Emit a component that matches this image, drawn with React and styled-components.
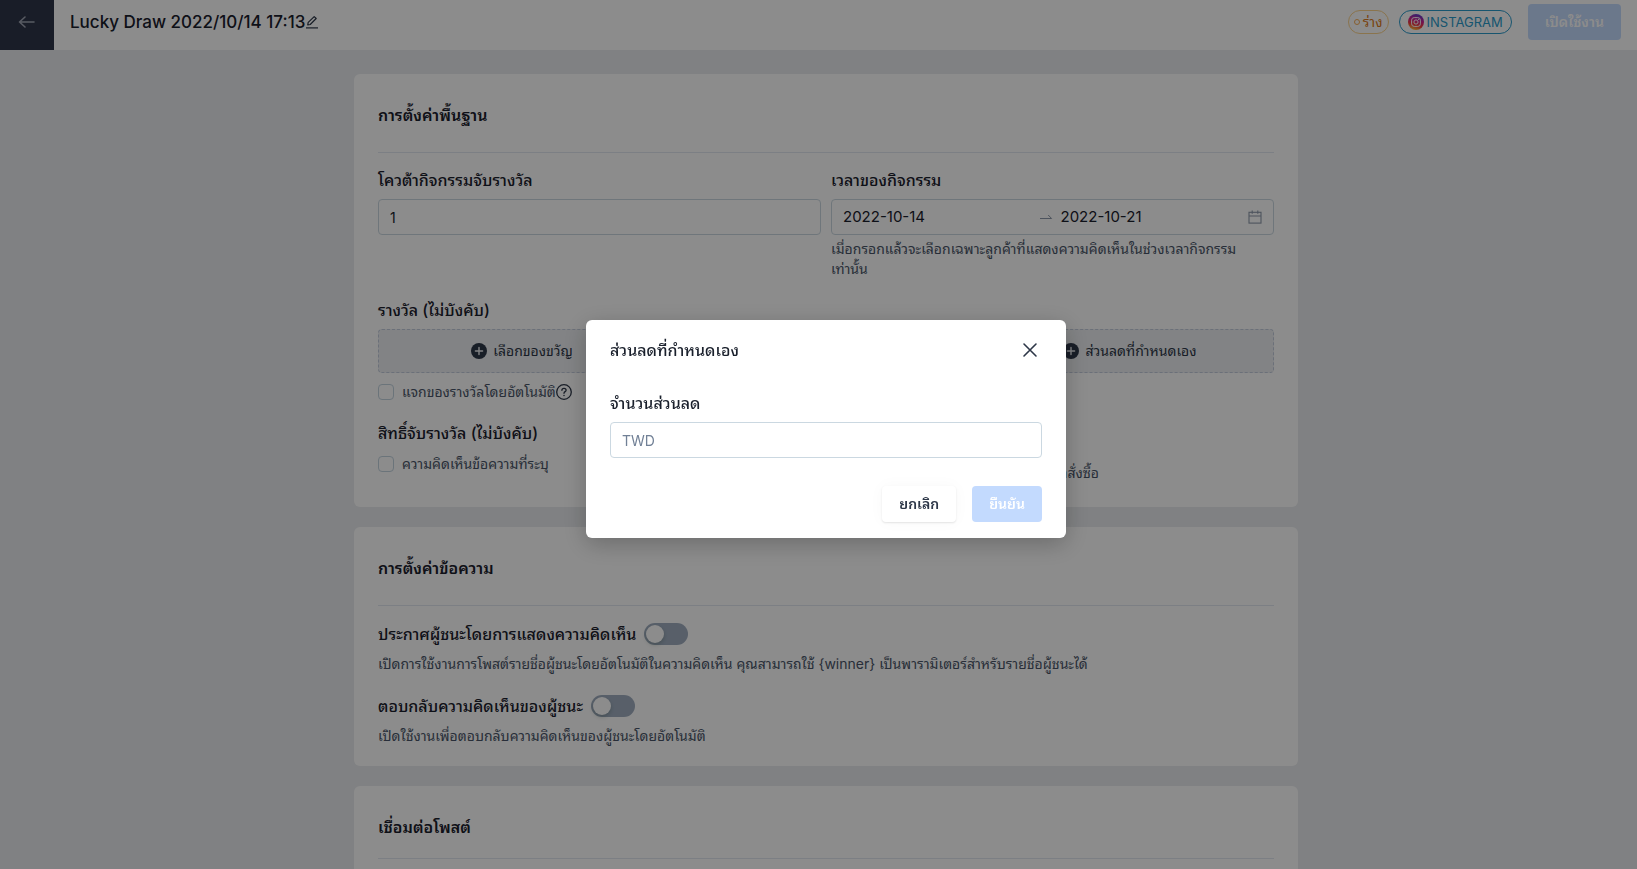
import React, {useState} from 'react';
import styled, {createGlobalStyle} from 'styled-components';

const GlobalStyle = createGlobalStyle`
  *, *::before, *::after {
    box-sizing: border-box;
  }
  body {
    margin: 0;
    background: #e9ebee;
    color: #1a202c;
    font-family: Inter, "Noto Sans Thai Looped", "Noto Looped Thai", Loma, "Noto Sans", sans-serif;
    font-size: 14px;
    line-height: 20px;
    overflow: hidden;
  }
  button, input {
    font: inherit;
    color: inherit;
  }
`;

const Page = styled.div`
  height: 100vh;
  overflow: hidden;
`;

const TopBar = styled.header`
  display: flex;
  height: 50px;
  background: #fff;
`;

const BackLink = styled.a`
  display: flex;
  justify-content: center;
  width: 54px;
  padding-top: 14px;
  background: #2f3549;
  color: #a0a6b4;
`;

const TopBarBody = styled.div`
  flex: 1;
  display: flex;
  align-items: center;
  justify-content: space-between;
  padding: 4px 16px 10px;
`;

const PageTitle = styled.h1`
  display: flex;
  align-items: center;
  margin: 0;
  font-size: 17px;
  font-weight: 500;
  line-height: 24px;
`;

const IconButton = styled.button`
  display: flex;
  padding: 0;
  border: 0;
  background: none;
  color: #2d3748;
  cursor: pointer;
`;

const TopBarActions = styled.div`
  display: flex;
  align-items: center;
  gap: 16px;
`;

const Tags = styled.div`
  display: flex;
  gap: 10px;
`;

const Tag = styled.span`
  display: flex;
  align-items: center;
  gap: 3px;
  height: 24px;
  padding: 0 ${props => (props.$tone === 'draft' ? '5px' : '8px')};
  border: 1px solid ${props => (props.$tone === 'draft' ? '#fbd38d' : '#2b9bcb')};
  border-radius: 12px;
  color: ${props => (props.$tone === 'draft' ? '#dd7a20' : '#2b9bcb')};
  font-size: ${props => (props.$tone === 'draft' ? '14px' : '13px')};
`;

const Dot = styled.span`
  width: 6px;
  height: 6px;
  border: 1px solid #f6ad55;
  border-radius: 50%;
`;

const Button = styled.button`
  height: 36px;
  padding: 0 17px;
  border: 0;
  border-radius: 4px;
  font-weight: 600;
  background: ${props => (props.$primary ? '#c3dafe' : '#fff')};
  color: ${props => (props.$primary ? '#fff' : '#2d3748')};
  box-shadow: ${props => (props.$primary ? 'none' : '0 1px 2px rgba(0, 0, 0, 0.1), 0 0 16px rgba(0, 0, 0, 0.03)')};
`;

const Content = styled.main`
  display: flex;
  flex-direction: column;
  align-items: center;
  gap: 20px;
  padding: 24px 0 24px 15px;
`;

const Card = styled.section`
  width: 100%;
  max-width: 944px;
  padding: 0 24px ${props => (props.$tight ? '16px' : '24px')};
  border-radius: 6px;
  background: #fff;
`;

const CardTitle = styled.h2`
  margin: 0;
  padding: 29px 0 ${props => (props.$compact ? '19px' : '25px')};
  border-bottom: 1px solid #e2e8f0;
  font-size: 16px;
  font-weight: 600;
  line-height: 24px;
`;

const Columns = styled.div`
  display: grid;
  grid-template-columns: repeat(${props => props.$count}, minmax(0, 1fr));
  align-items: start;
  gap: ${props => props.$gap};
`;

const Field = styled.div`
  display: flex;
  flex-direction: column;
`;

const Label = styled.label`
  margin-bottom: 7px;
  font-size: 16px;
  font-weight: 500;
  line-height: 24px;
`;

const GroupTitle = styled.h3`
  margin: 0 0 7px;
  font-size: 16px;
  font-weight: 500;
  line-height: 24px;
`;

const Fields = styled(Columns)`
  padding: 15px 0 19px;
`;

const TextInput = styled.input`
  width: 100%;
  height: 36px;
  padding: 0 11px;
  border: 1px solid #cbd8e1;
  border-radius: 4px;
  background: #fff;
  outline: 0;

  &::placeholder {
    color: #718096;
    opacity: 1;
  }
`;

const DateRange = styled.div`
  display: flex;
  align-items: center;
  height: 36px;
  padding: 0 11px;
  border: 1px solid #cbd8e1;
  border-radius: 4px;
  color: #8d98aa;
`;

const DateInput = styled.input`
  flex: 1;
  min-width: 0;
  padding: 0;
  border: 0;
  background: none;
  color: #1a202c;
  font-size: 15px;
  outline: 0;
`;

const RangeArrow = styled.span`
  display: flex;
  padding: 0 8px;
`;

const Hint = styled.p`
  margin: ${props => (props.$spaced ? '8px' : '4px')} 0 0;
  padding-right: 24px;
  color: #4a5568;
`;

const AddButton = styled.button`
  display: flex;
  align-items: center;
  justify-content: center;
  gap: 6px;
  height: 44px;
  border: 1px dashed #c3ccdc;
  border-radius: 4px;
  background: #edeff2;
  color: #2d3748;
`;

const CheckLabel = styled.label`
  display: flex;
  align-items: center;
  gap: 8px;
  color: #4a5568;
`;

const Checkbox = styled.input`
  appearance: none;
  width: 16px;
  height: 16px;
  margin: 0;
  border: 1px solid #c3d3de;
  border-radius: 4px;
`;

const CheckRow = styled.div`
  display: flex;
  align-items: center;
  padding: ${props => (props.$last ? '2px 0 0' : '9px 0 19px')};
`;

const OrderNote = styled.div`
  display: flex;
  justify-content: flex-end;
  width: 268px;
  padding-top: 11px;
  color: #4a5568;
`;

const SwitchGroup = styled.div`
  padding: 16px 0 4px;
`;

const SwitchRow = styled.label`
  display: flex;
  align-items: center;
  gap: 8px;
  height: 24px;
  font-size: 16px;
  font-weight: 500;
  line-height: 24px;
`;

const Switch = styled.input`
  appearance: none;
  display: flex;
  width: 44px;
  height: 22px;
  margin: 0;
  padding: 2px;
  border-radius: 11px;
  background: ${props => (props.checked ? '#4299e1' : '#a0aec0')};
  justify-content: ${props => (props.checked ? 'flex-end' : 'flex-start')};

  &::before {
    content: '';
    width: 18px;
    height: 18px;
    border-radius: 50%;
    background: #fff;
    box-shadow: 0 2px 4px rgba(0, 35, 11, 0.2);
  }
`;

const Overlay = styled.div`
  position: fixed;
  inset: 0;
  display: flex;
  align-items: flex-start;
  justify-content: center;
  padding: 320px 0 0 15px;
  background: rgba(0, 0, 0, 0.45);
`;

const Modal = styled.div`
  width: 480px;
  padding: 0 24px 16px;
  border-radius: 6px;
  background: #fff;
  box-shadow: 0 6px 24px rgba(0, 0, 0, 0.24);
`;

const ModalHeader = styled.div`
  display: flex;
  align-items: center;
  justify-content: space-between;
  height: 60px;
  margin-bottom: 11px;
`;

const ModalTitle = styled.h2`
  margin: 0;
  font-size: 16px;
  font-weight: 500;
  line-height: 24px;
`;

const ModalFooter = styled.div`
  display: flex;
  justify-content: flex-end;
  gap: 16px;
  padding-top: 28px;
`;

const BackIcon = () => (
  <svg width="18" height="16" viewBox="0 0 18 16" fill="none" stroke="currentColor" strokeWidth="1.6" strokeLinecap="round" strokeLinejoin="round">
    <path d="M16 8H1.5M7 3L1.5 8L7 13" />
  </svg>
);

const EditIcon = () => (
  <svg width="14" height="14" viewBox="0 0 14 14" fill="none" stroke="currentColor" strokeWidth="1.2" strokeLinejoin="round">
    <path d="M2.7 10L3.2 7.4L9.2 1.6L11.2 3.5L5.2 9.5Z" />
    <path d="M1 12.9H13" />
  </svg>
);

const InstagramIcon = () => (
  <svg width="16" height="16" viewBox="0 0 16 16">
    <defs>
      <linearGradient id="insta" x1="0.35" y1="1" x2="0.65" y2="0">
        <stop offset="0" stopColor="#ffc43d" />
        <stop offset="0.3" stopColor="#f5423a" />
        <stop offset="0.6" stopColor="#d3208f" />
        <stop offset="1" stopColor="#5a3fd0" />
      </linearGradient>
    </defs>
    <circle cx="8" cy="8" r="8" fill="url(#insta)" />
    <rect x="3.6" y="3.6" width="8.8" height="8.8" rx="2.6" fill="none" stroke="#fff" strokeWidth="1" />
    <circle cx="8" cy="8" r="2.1" fill="none" stroke="#fff" strokeWidth="1" />
    <circle cx="10.6" cy="5.4" r="0.6" fill="#fff" />
  </svg>
);

const SwapIcon = () => (
  <svg width="14" height="14" viewBox="0 0 14 14" fill="none" stroke="currentColor" strokeWidth="1">
    <path d="M1 8.5H12.6L9.2 5" />
  </svg>
);

const CalendarIcon = () => (
  <svg width="14" height="14" viewBox="0 0 14 14" fill="none" stroke="currentColor" strokeWidth="1.1">
    <rect x="1" y="2.3" width="12" height="10.8" />
    <path d="M1 6H13M4.2 0.6V3.8M9.8 0.6V3.8" />
  </svg>
);

const PlusIcon = () => (
  <svg width="16" height="16" viewBox="0 0 16 16">
    <circle cx="8" cy="8" r="8" fill="#2d3748" />
    <path d="M8 4.4V11.6M4.4 8H11.6" stroke="#edeff2" strokeWidth="1.4" strokeLinecap="round" />
  </svg>
);

const HelpIcon = () => (
  <svg width="16" height="16" viewBox="0 0 16 16" fill="none" stroke="currentColor" strokeWidth="1.3" strokeLinecap="round">
    <circle cx="8" cy="8" r="7.3" />
    <path d="M5.9 6.3C5.9 5 6.8 4.3 8 4.3C9.2 4.3 10.1 5.1 10.1 6.2C10.1 7.6 8 7.7 8 9.3" />
    <path d="M8 11.5V11.6" strokeWidth="1.5" />
  </svg>
);

const CloseIcon = () => (
  <svg width="24" height="24" viewBox="0 0 24 24" fill="none" stroke="currentColor" strokeWidth="1.6" strokeLinecap="round">
    <path d="M6 6L18 18M18 6L6 18" />
  </svg>
);

const gifts = ['เลือกของขวัญ', 'เลือกคูปอง', 'ส่วนลดที่กำหนดเอง'];

const switches = [
  {
    title: 'ประกาศผู้ชนะโดยการแสดงความคิดเห็น',
    text: 'เปิดการใช้งานการโพสต์รายชื่อผู้ชนะโดยอัตโนมัติในความคิดเห็น คุณสามารถใช้ {winner} เป็นพารามิเตอร์สำหรับรายชื่อผู้ชนะได้',
  },
  {
    title: 'ตอบกลับความคิดเห็นของผู้ชนะ',
    text: 'เปิดใช้งานเพื่อตอบกลับความคิดเห็นของผู้ชนะโดยอัตโนมัติ',
  },
];

const SwitchField = ({title, text}) => {
  const [on, setOn] = useState(false);
  return (
    <SwitchGroup>
      <SwitchRow>
        {title}
        <Switch type="checkbox" role="switch" checked={on} onChange={() => setOn(!on)} />
      </SwitchRow>
      <Hint $spaced>{text}</Hint>
    </SwitchGroup>
  );
};

const DiscountModal = () => (
  <Overlay>
    <Modal role="dialog" aria-modal="true" aria-labelledby="discount-title">
      <ModalHeader>
        <ModalTitle id="discount-title">ส่วนลดที่กำหนดเอง</ModalTitle>
        <IconButton type="button" aria-label="ปิด"><CloseIcon /></IconButton>
      </ModalHeader>
      <Field>
        <Label htmlFor="discount">จำนวนส่วนลด</Label>
        <TextInput id="discount" placeholder="TWD" />
      </Field>
      <ModalFooter>
        <Button type="button">ยกเลิก</Button>
        <Button type="button" $primary disabled>ยืนยัน</Button>
      </ModalFooter>
    </Modal>
  </Overlay>
);

export default function App() {
  return (
    <Page>
      <GlobalStyle />
      <TopBar>
        <BackLink href="#" aria-label="กลับ"><BackIcon /></BackLink>
        <TopBarBody>
          <PageTitle>
            Lucky Draw 2022/10/14 17:13
            <IconButton type="button" aria-label="แก้ไข"><EditIcon /></IconButton>
          </PageTitle>
          <TopBarActions>
            <Tags>
              <Tag $tone="draft"><Dot />ร่าง</Tag>
              <Tag><InstagramIcon />INSTAGRAM</Tag>
            </Tags>
            <Button type="button" $primary disabled>เปิดใช้งาน</Button>
          </TopBarActions>
        </TopBarBody>
      </TopBar>

      <Content>
        <Card>
          <CardTitle>การตั้งค่าพื้นฐาน</CardTitle>
          <Fields $count={2} $gap="10px">
            <Field>
              <Label htmlFor="quota">โควต้ากิจกรรมจับรางวัล</Label>
              <TextInput id="quota" defaultValue="1" />
            </Field>
            <Field>
              <Label htmlFor="start">เวลาของกิจกรรม</Label>
              <DateRange>
                <DateInput id="start" defaultValue="2022-10-14" />
                <RangeArrow><SwapIcon /></RangeArrow>
                <DateInput aria-label="วันที่สิ้นสุด" defaultValue="2022-10-21" />
                <CalendarIcon />
              </DateRange>
              <Hint>เมื่อกรอกแล้วจะเลือกเฉพาะลูกค้าที่แสดงความคิดเห็นในช่วงเวลากิจกรรมเท่านั้น</Hint>
            </Field>
          </Fields>

          <GroupTitle>รางวัล (ไม่บังคับ)</GroupTitle>
          <Columns $count={3} $gap="16px">
            {gifts.map(gift => (
              <AddButton type="button" key={gift}><PlusIcon />{gift}</AddButton>
            ))}
          </Columns>
          <CheckRow>
            <CheckLabel><Checkbox type="checkbox" />แจกของรางวัลโดยอัตโนมัติ</CheckLabel>
            <IconButton type="button" aria-label="ช่วยเหลือ"><HelpIcon /></IconButton>
          </CheckRow>

          <GroupTitle>สิทธิ์จับรางวัล (ไม่บังคับ)</GroupTitle>
          <Columns $count={2} $gap="10px">
            <CheckRow $last>
              <CheckLabel><Checkbox type="checkbox" />ความคิดเห็นข้อความที่ระบุ</CheckLabel>
            </CheckRow>
            <OrderNote>ลูกค้าที่มีคำสั่งซื้อ</OrderNote>
          </Columns>
        </Card>

        <Card $tight>
          <CardTitle>การตั้งค่าข้อความ</CardTitle>
          {switches.map(item => <SwitchField key={item.title} {...item} />)}
        </Card>

        <Card>
          <CardTitle $compact>เชื่อมต่อโพสต์</CardTitle>
        </Card>
      </Content>

      <DiscountModal />
    </Page>
  );
}
